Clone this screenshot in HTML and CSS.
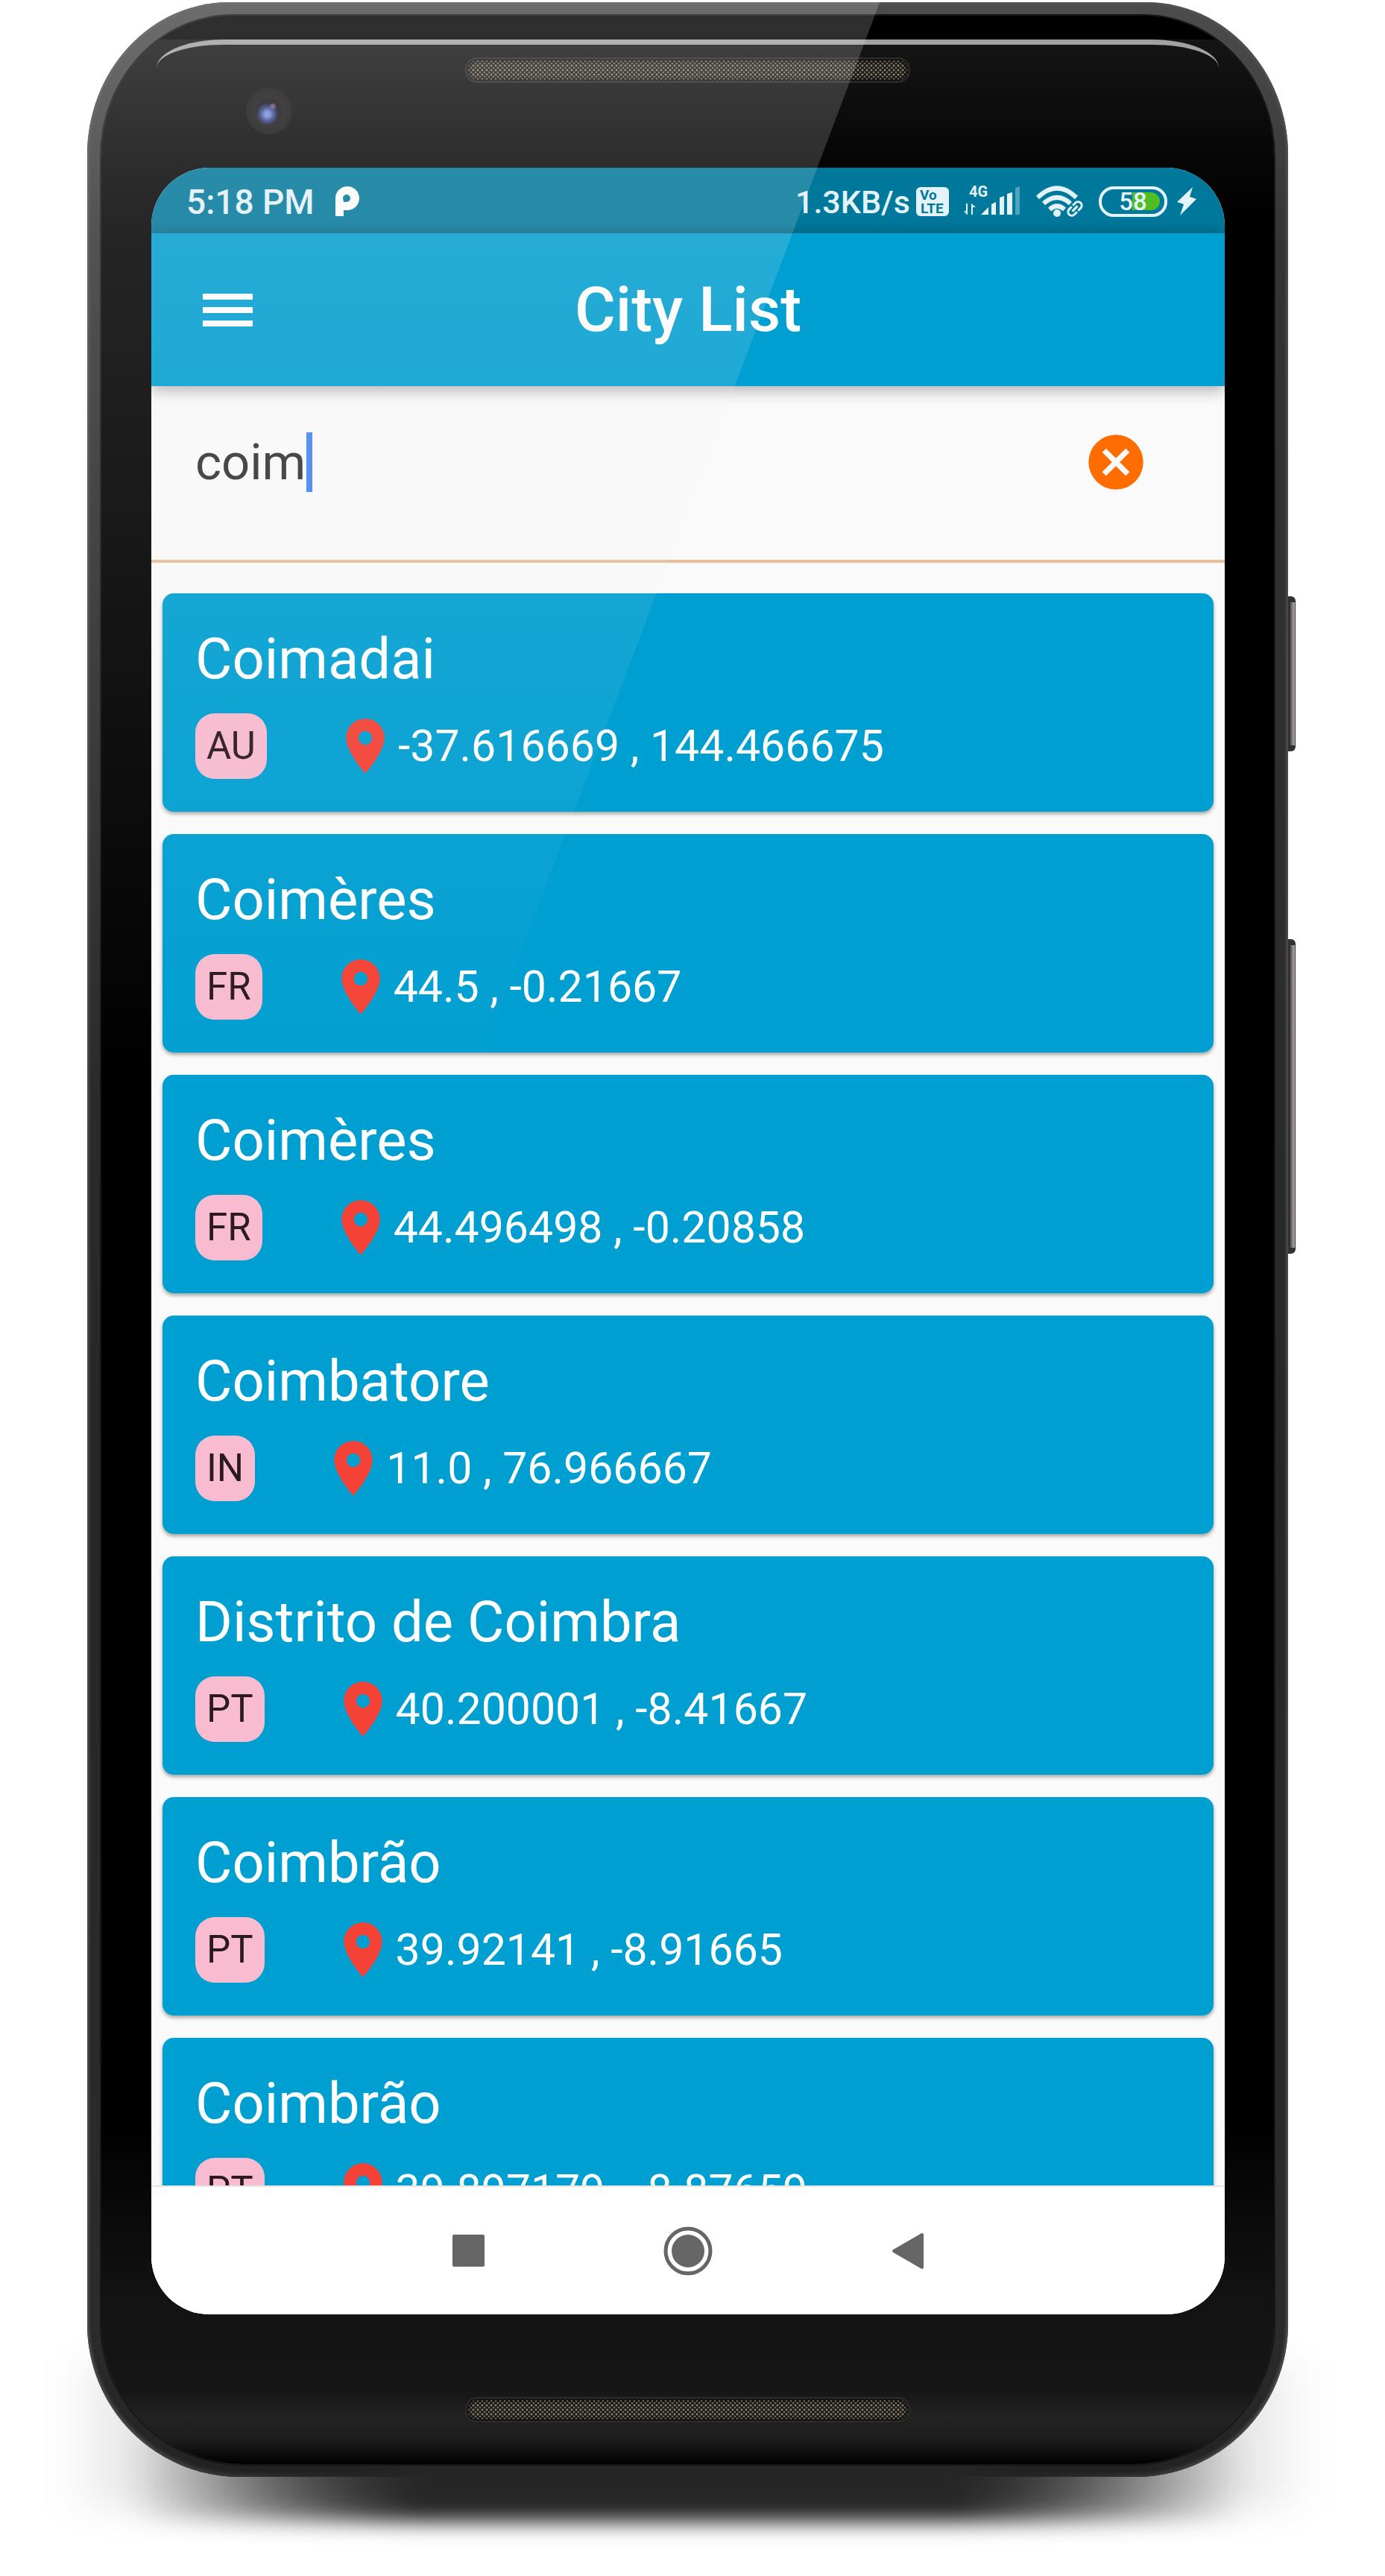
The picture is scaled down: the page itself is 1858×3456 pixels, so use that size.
FILE: index.html
```html
<!DOCTYPE html>
<html lang="en">
<head>
<meta charset="utf-8">
<meta name="viewport" content="width=device-width, initial-scale=1">
<title>City List</title>
<link rel="stylesheet" href="styles.css">
</head>
<body>
<svg class="sprite" aria-hidden="true">
  <symbol id="pin" viewBox="0 0 24 24"><path d="M12 2C8.130 2 5 5.130 5 9c0 5.250 7 13 7 13s7-7.750 7-13c0-3.870-3.130-7-7-7zm0 9.500a2.500 2.500 0 1 1 0-5 2.500 2.500 0 0 1 0 5z"/></symbol>
</svg>
<div class="stage">
  <div class="phone">
    <span class="side-key power"></span>
    <span class="side-key volume"></span>
    <div class="glass">
      <div class="bezel-top">
        <span class="speaker"></span>
        <span class="camera"></span>
      </div>

      <div class="screen">
        <div class="status">
          <span class="status-text">5:18 PM</span>
          <svg class="app-mark" width="34" height="44" viewBox="450 248 34 44" aria-hidden="true"><path fill="currentColor" fill-rule="evenodd" d="M452 289V266a16 16 0 1 1 16 15h-5v8zM463 270h4a5 5 0 1 0-5-5z"/></svg>
          <div class="status-right">
            <span class="status-text speed">1.3KB/s</span>
            <svg class="volte" width="44" height="44" viewBox="1231 248 44 44" role="img" aria-label="VoLTE">
              <rect x="1231" y="250" width="44" height="39" rx="6" fill="currentColor"/>
              <text x="1236" y="267" class="volte-text">Vo</text>
              <text x="1237" y="285" class="volte-text">LTE</text>
            </svg>
            <svg class="signal" width="78" height="44" viewBox="1293 248 78 44" role="img" aria-label="Signal">
              <text x="1301" y="263" class="signal-text">4G</text>
              <g fill="currentColor">
                <path d="M1299 272v15h-1l-4-5h3v-10zM1304 287v-15l6 5h-4v10z"/>
                <path d="M1317 287l10-10v10z"/>
                <path d="M1331 287v-14l6-3v17zM1342 287v-23l6-2v25zM1352 287v-28l7-2v30z"/>
                <path opacity=".35" d="M1363 287v-36l6-2v38z"/>
              </g>
            </svg>
            <svg class="wifi" width="66" height="44" viewBox="1390 248 66 44" role="img" aria-label="Wi-Fi">
              <g fill="none" stroke="currentColor" stroke-width="6">
                <path d="M1393 264Q1419 239 1445 264"/>
                <path d="M1401 272Q1419 256 1437 272"/>
                <path d="M1409 280Q1419 271 1429 280"/>
              </g>
              <circle cx="1419" cy="285" r="5" fill="currentColor"/>
              <g fill="none" stroke="currentColor" stroke-width="3" transform="rotate(-46 1443 279)">
                <path d="M1442 274h-5a5 5 0 0 0 0 10h5M1444 274h5a5 5 0 0 1 0 10h-5M1438 279h10"/>
              </g>
            </svg>
            <svg class="battery" width="92" height="44" viewBox="1475 248 92 44" role="img" aria-label="Battery 58 percent">
              <path fill="#4fbd24" d="M1520 257h25a12 12 0 0 1 0 24h-25z"/>
              <rect x="1477" y="251" width="88" height="37" rx="18" fill="none" stroke="currentColor" stroke-width="4"/>
              <text x="1521" y="281" text-anchor="middle" class="battery-text">58</text>
            </svg>
            <svg class="bolt" width="28" height="44" viewBox="1578 248 28 44" aria-hidden="true"><path fill="currentColor" d="M1600 250l-21 20 9 3-5 15 22-22-9-3z"/></svg>
          </div>
        </div>

        <header class="app-bar">
          <button class="menu" type="button" aria-label="Open menu"><span></span><span></span><span></span></button>
          <h1>City List</h1>
        </header>

        <form class="search">
          <label class="field"><input type="text" value="coim" size="4" aria-label="Search city"><span class="caret"></span></label>
          <button class="clear" type="button" aria-label="Clear search">
            <svg viewBox="0 0 24 24" aria-hidden="true"><path fill="currentColor" d="M12 2a10 10 0 1 0 0 20 10 10 0 0 0 0-20zm5 13.590L15.590 17 12 13.410 8.410 17 7 15.590 10.590 12 7 8.410 8.410 7 12 10.590 15.590 7 17 8.410 13.410 12z"/></svg>
          </button>
        </form>

        <ul class="cities">
          <li class="card"><h2>Coimadai</h2><div class="meta"><span class="badge">AU</span><svg class="pin"><use href="#pin"/></svg><span class="coords">-37.616669 , 144.466675</span></div></li>
          <li class="card"><h2>Coimères</h2><div class="meta"><span class="badge">FR</span><svg class="pin"><use href="#pin"/></svg><span class="coords">44.5 , -0.21667</span></div></li>
          <li class="card"><h2>Coimères</h2><div class="meta"><span class="badge">FR</span><svg class="pin"><use href="#pin"/></svg><span class="coords">44.496498 , -0.20858</span></div></li>
          <li class="card"><h2>Coimbatore</h2><div class="meta"><span class="badge">IN</span><svg class="pin"><use href="#pin"/></svg><span class="coords">11.0 , 76.966667</span></div></li>
          <li class="card"><h2>Distrito de Coimbra</h2><div class="meta"><span class="badge">PT</span><svg class="pin"><use href="#pin"/></svg><span class="coords">40.200001 , -8.41667</span></div></li>
          <li class="card"><h2>Coimbrão</h2><div class="meta"><span class="badge">PT</span><svg class="pin"><use href="#pin"/></svg><span class="coords">39.92141 , -8.91665</span></div></li>
          <li class="card"><h2>Coimbrão</h2><div class="meta"><span class="badge">PT</span><svg class="pin"><use href="#pin"/></svg><span class="coords">39.897179 , -8.87659</span></div></li>
        </ul>

        <nav class="nav">
          <button type="button" aria-label="Recent apps"><svg viewBox="0 0 68 68"><rect x="13" y="12" width="43" height="43" rx="2" fill="currentColor"/></svg></button>
          <button type="button" aria-label="Home"><svg viewBox="0 0 68 68"><circle cx="34" cy="34" r="30" fill="none" stroke="currentColor" stroke-width="5"/><circle cx="34" cy="34" r="22" fill="currentColor"/></svg></button>
          <button type="button" aria-label="Back"><svg viewBox="0 0 68 68"><path fill="currentColor" stroke="currentColor" stroke-width="4" stroke-linejoin="round" d="M15 34l38-22v44z"/></svg></button>
        </nav>
      </div>

      <div class="bezel-bottom"><span class="speaker"></span></div>
    </div>
    <div class="gloss"></div>
  </div>
</div>
</body>
</html>
```
FILE: styles.css
```css
* { box-sizing: border-box; }

body {
  margin: 0;
  background: #fff;
  font-family: Roboto, "Liberation Sans", sans-serif;
}

button {
  padding: 0;
  border: 0;
  background: none;
  color: inherit;
  font: inherit;
}

h1, h2, ul { margin: 0; padding: 0; }

.sprite { display: none; }

.stage {
  overflow: hidden;
  padding: 3px 130px 133px 117px;
}

/* Device body */
.phone {
  position: relative;
  z-index: 0;
  padding: 18px 19px 17px;
  border-radius: 190px 190px 205px 205px / 205px 205px 205px 205px;
  background: linear-gradient(#4c4c4c, #343434 10%, #262626 60%, #2c2c2c);
  box-shadow: inset 0 0 4px 2px #555, inset 0 -5px 5px #444;
}

/* Ground shadow, a wide soft one and a dense core */
.phone::before,
.phone::after {
  content: "";
  position: absolute;
  z-index: -1;
}

.phone::before {
  inset: auto -40px -44px -40px;
  height: 200px;
  background: linear-gradient(90deg, transparent, #0003 12%, #0009 26%, #0009 74%, #0003 88%, transparent);
  filter: blur(22px);
}

.phone::after {
  inset: auto 60px -58px 60px;
  height: 110px;
  background: linear-gradient(90deg, transparent, #262626 26%, #262626 74%, transparent);
  filter: blur(14px);
}

.side-key {
  position: absolute;
  left: 100%;
  width: 10px;
  border-radius: 0 6px 6px 0;
  border: solid #33302f;
  border-width: 8px 1px 8px 3px;
  background: linear-gradient(90deg, #555, #b9aeb0);
}

.power { top: 797px; height: 208px; }
.volume { top: 1257px; height: 422px; }

.glass {
  position: relative;
  border-radius: 176px 176px 190px 190px / 190px;
  background: #000;
  box-shadow: 0 0 0 2px #161616, inset 0 -1px 0 1px #3c3c3c;
  overflow: hidden;
}

.phone > .glass::before {
  content: "";
  position: absolute;
  inset: 0;
  border-radius: inherit;
  background:
    linear-gradient(#000, #000) 0 0 / 100% 32px no-repeat,
    linear-gradient(#181818, #060606 190px, #000 280px, #000 86%, #121212 93%, #161616 97%, #222 98%, #1d1d1d 99%, #000 100%);
}

.bezel-top,
.bezel-bottom {
  position: relative;
  display: flex;
  flex-direction: column;
  align-items: center;
}

.bezel-top {
  height: 204px;
  padding-top: 56px;
}

/* Thin rim of light along the upper edge */
.bezel-top::before {
  content: "";
  position: absolute;
  inset: 32px 74px auto;
  height: 80px;
  border-top: 7px solid #a2a2a2;
  border-radius: 90px 90px 0 0 / 38px 38px 0 0;
}

.bezel-bottom {
  height: 201px;
  padding-top: 111px;
}

.speaker {
  width: 38%;
  height: 34px;
  border: 2px solid #2c2c2c;
  border-radius: 16px;
  background:
    radial-gradient(circle at 50% 50%, #8a8270 0 1px, transparent 2px) 0 0 / 6px 6px,
    radial-gradient(circle at 50% 50%, #6e685a 0 1px, transparent 2px) 3px 3px / 6px 6px,
    #14120f;
  box-shadow: inset 0 0 4px 2px #070707;
}

.camera {
  align-self: flex-start;
  width: 62px;
  height: 62px;
  margin: 7px 0 0 194px;
  border-radius: 50%;
  background:
    radial-gradient(circle at 58% 40%, #76508a 0 2px, transparent 5px),
    radial-gradient(circle at 46% 57%, #7890dd 0 3px, #38458a 9px, transparent 15px),
    radial-gradient(circle, #15151c 0 17px, #1d1b1c 19px, #1c191a 20px, #181516 30px, #101010);
}

/* Display */
.screen {
  position: relative;
  display: flex;
  flex-direction: column;
  aspect-ratio: 1 / 2;
  margin: 0 66px 0 67px;
  border-radius: 78px;
  background: #fafafa;
  overflow: hidden;
}

.status {
  display: flex;
  align-items: center;
  flex: none;
  height: 88px;
  padding: 4px 37px 0 47px;
  background: #00789b;
  color: #e4f3fa;
}

.status svg { overflow: visible; }

.status-text {
  font-size: 46px;
  font-weight: 500;
  line-height: 52px;
  white-space: nowrap;
}

.speed { font-size: 43px; }

.app-mark { margin-left: 26px; color: #fff; }

.status-right {
  display: flex;
  align-items: center;
  margin-left: auto;
}

.volte { margin-left: 8px; }
.signal, .wifi, .battery { margin-left: 19px; }
.bolt { margin-left: 12px; }

.volte-text { fill: #00789b; font-size: 19px; font-weight: 700; }
.signal-text { fill: currentColor; font-size: 20px; font-weight: 700; }
.battery-text { fill: currentColor; font-size: 33px; font-weight: 500; }

.app-bar {
  position: relative;
  display: grid;
  grid-template-columns: 1fr auto 1fr;
  align-items: center;
  flex: none;
  height: 205px;
  padding: 0 69px;
  background: #009fd1;
  box-shadow: 0 4px 20px rgba(0, 0, 0, .35);
  color: #fff;
}

.app-bar h1 {
  font-size: 84px;
  font-weight: 500;
  line-height: 100px;
}

.menu {
  display: grid;
  gap: 10px;
  width: 67px;
}

.menu span { height: 8px; background: currentColor; }

.search {
  display: flex;
  align-items: center;
  flex: none;
  padding: 58px 102px 87px 59px;
  border-bottom: 4px solid #e8bd98;
}

.field {
  display: flex;
  align-items: center;
  flex: 1;
}

.field input {
  width: 149px;
  padding: 0;
  border: 0;
  outline: 0;
  background: none;
  color: #333;
  font: 400 67px/80px Roboto, "Liberation Sans", sans-serif;
}

.caret {
  width: 8px;
  height: 80px;
  background: #4285f4;
}

.clear {
  width: 88px;
  height: 88px;
  color: #ff6d00;
}

.clear svg { display: block; width: 100%; height: 100%; }

.cities {
  display: flex;
  flex-direction: column;
  gap: 30px;
  flex: 1;
  min-height: 0;
  padding: 41px 15px 0;
  list-style: none;
  overflow: hidden;
}

.card {
  flex: none;
  padding: 44px;
  border-radius: 15px;
  background: #009fd1;
  box-shadow: 0 3px 5px rgba(0, 0, 0, .35);
  color: #fff;
}

.card h2 {
  margin-bottom: 29px;
  font-size: 76px;
  font-weight: 400;
  line-height: 88px;
}

.meta {
  display: flex;
  align-items: center;
}

.badge {
  padding: 0 15px;
  border-radius: 26px;
  background: #f8bbd0;
  color: #2b1a20;
  font-size: 51px;
  line-height: 88px;
}

.pin {
  width: 88px;
  height: 88px;
  margin-left: 88px;
  fill: #f44336;
}

.coords {
  font-size: 59px;
  line-height: 88px;
  white-space: nowrap;
}

.nav {
  display: flex;
  align-items: center;
  justify-content: center;
  gap: 227px;
  flex: none;
  height: 173px;
  border-top: 2px solid #e6e6e6;
  background: #fff;
  color: #666;
}

.nav button { width: 68px; height: 68px; }
.nav svg { display: block; }

/* Diagonal reflection over the glass */
.gloss {
  position: absolute;
  inset: 0 0 auto;
  height: 1450px;
  border-radius: 190px 0 0 0 / 205px 0 0 0;
  background: linear-gradient(rgba(238, 238, 238, .2), rgba(238, 238, 238, 0));
  clip-path: polygon(0 0, 66% 0, 32% 100%, 0 100%);
  pointer-events: none;
}
```
